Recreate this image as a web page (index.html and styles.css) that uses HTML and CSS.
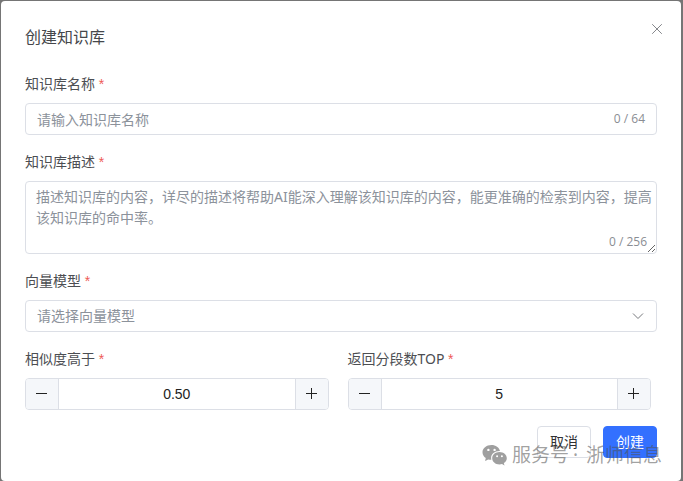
FILE: index.html
```html
<!DOCTYPE html>
<html lang="zh-CN">
<head>
<meta charset="utf-8">
<meta name="viewport" content="width=device-width, initial-scale=1">
<title>创建知识库</title>
<link rel="stylesheet" href="styles.css">
</head>
<body>
<main class="dialog" role="dialog" aria-labelledby="dialog-title">
  <header class="dialog-header">
    <h1 class="dialog-title" id="dialog-title">创建知识库</h1>
    <button class="close" type="button" aria-label="关闭">
      <svg viewBox="0 0 12 12" width="12" height="12"><path d="M1.2 1.2 10.8 10.8M10.8 1.2 1.2 10.8"/></svg>
    </button>
  </header>
  <form class="form">
    <div class="field">
      <label class="label" for="name">知识库名称 <span class="required">*</span></label>
      <div class="control">
        <input class="text-input" id="name" type="text" maxlength="64" placeholder="请输入知识库名称">
        <span class="count">0 / 64</span>
      </div>
    </div>
    <div class="field">
      <label class="label" for="desc">知识库描述 <span class="required">*</span></label>
      <div class="area-wrap">
        <textarea class="area" id="desc" maxlength="256" placeholder="描述知识库的内容，详尽的描述将帮助AI能深入理解该知识库的内容，能更准确的检索到内容，提高该知识库的命中率。"></textarea>
        <span class="count area-count">0 / 256</span>
      </div>
    </div>
    <div class="field">
      <label class="label" for="model">向量模型 <span class="required">*</span></label>
      <div class="control">
        <select class="select" id="model"><option>请选择向量模型</option></select>
        <svg class="chevron" viewBox="0 0 12 12" width="12" height="12"><path d="M1 3.5 6 8.5 11 3.5"/></svg>
      </div>
    </div>
    <div class="pair">
      <div class="field">
        <label class="label" for="similarity">相似度高于 <span class="required">*</span></label>
        <div class="control stepper">
          <button class="step step-minus" type="button" aria-label="减少"><svg viewBox="0 0 12 12" width="12" height="12"><path d="M0 5.5H11"/></svg></button>
          <input class="number" id="similarity" type="text" inputmode="decimal" value="0.50">
          <button class="step step-plus" type="button" aria-label="增加"><svg viewBox="0 0 12 12" width="12" height="12"><path d="M0 5.5H11M5.5 0V11"/></svg></button>
        </div>
      </div>
      <div class="field">
        <label class="label" for="top">返回分段数TOP <span class="required">*</span></label>
        <div class="control stepper">
          <button class="step step-minus" type="button" aria-label="减少"><svg viewBox="0 0 12 12" width="12" height="12"><path d="M0 5.5H11"/></svg></button>
          <input class="number" id="top" type="text" inputmode="numeric" value="5">
          <button class="step step-plus" type="button" aria-label="增加"><svg viewBox="0 0 12 12" width="12" height="12"><path d="M0 5.5H11M5.5 0V11"/></svg></button>
        </div>
      </div>
    </div>
    <footer class="actions">
      <button class="btn" type="button">取消</button>
      <button class="btn btn-primary" type="submit">创建</button>
    </footer>
  </form>
  <div class="watermark">
    <svg viewBox="0 0 26 22" width="26" height="22">
      <path fill-rule="evenodd" d="M9.5 1C4.300 1 .5 4.300.5 8.300c0 2.400 1.300 4.400 3.300 5.800L3 17l3.200-1.600c1.100.3 2 .4 3.200.4-.2-.6-.3-1.200-.3-1.800 0-4 3.600-7 8.300-7h.6C17.200 3.500 13.700 1 9.500 1ZM6.400 4.700a1.200 1.200 0 1 1 0 2.400 1.200 1.200 0 0 1 0-2.400Zm6.200 0a1.200 1.200 0 1 1 0 2.400 1.200 1.200 0 0 1 0-2.400Z"/>
      <path fill-rule="evenodd" d="M17.500 8c-4.200 0-7.300 2.800-7.300 6.200s3.100 6.200 7.300 6.200c.9 0 1.700-.1 2.500-.4l2.500 1.400-.7-2.300c1.800-1.200 3-2.900 3-4.900C24.800 10.800 21.600 8 17.500 8Zm-2.400 3.200a1 1 0 1 1 0 2 1 1 0 0 1 0-2Zm4.800 0a1 1 0 1 1 0 2 1 1 0 0 1 0-2Z"/>
    </svg>
    <span>服务号</span>
    <span>·</span>
    <span class="watermark-name">浙师信息</span>
  </div>
</main>
</body>
</html>
```
FILE: styles.css
```css
* {
  box-sizing: border-box;
}

body {
  margin: 0;
  padding: 1px 2px 0 1px;
  min-height: 100vh;
  display: flex;
  background: #757575;
  color: #4c4e52;
  font: 14px/22px "Noto Sans", "Noto Sans CJK SC", sans-serif;
}

button,
input,
select,
textarea {
  margin: 0;
  padding: 0;
  border: 0;
  background: none;
  color: inherit;
  font: inherit;
}

svg {
  display: block;
  fill: none;
  stroke: currentColor;
}

.dialog {
  position: relative;
  flex: 1;
  min-width: 0;
  padding: 24px 24px 22px;
  border-radius: 4px;
  background: #fff;
}

.dialog-header {
  display: flex;
  justify-content: space-between;
  align-items: flex-start;
  margin-bottom: 24px;
}

.dialog-title {
  margin: 0;
  color: #45474b;
  font-size: 16px;
  font-weight: 400;
  line-height: 24px;
}

.close {
  margin: -2px -6px 0 0;
  color: #85878b;
}

.form {
  display: flex;
  flex-direction: column;
  gap: 16px;
}

.field {
  display: flex;
  flex-direction: column;
  gap: 8px;
  min-width: 0;
}

.required {
  color: #ee5a56;
  font-family: "Liberation Sans", sans-serif;
}

.control,
.area {
  border: 1px solid #dcdfe6;
  border-radius: 4px;
  background: #fff;
}

.control {
  position: relative;
  display: flex;
  align-items: center;
  height: 32px;
}

.text-input,
.select,
.number {
  flex: 1;
  min-width: 0;
  height: 30px;
  outline: 0;
}

.text-input {
  padding-left: 11px;
}

.text-input::placeholder,
.area::placeholder {
  color: #8c929b;
  opacity: 1;
}

.count {
  padding-right: 11px;
  color: #8a8d93;
  font-family: "Open Sans", sans-serif;
  font-size: 12px;
}

.area-wrap {
  position: relative;
  display: flex;
}

.area {
  flex: 1;
  min-width: 0;
  height: 73px;
  padding: 4px 4px 4px 10px;
  line-height: 21px;
  overflow: hidden;
  resize: vertical;
  outline: 0;
}

.area-count {
  position: absolute;
  right: 10px;
  bottom: 1px;
  padding: 0;
}

.select {
  appearance: none;
  padding: 0 32px 0 11px;
  color: #8c929b;
}

.chevron {
  position: absolute;
  right: 12px;
  color: #77797d;
  pointer-events: none;
}

.pair {
  display: grid;
  grid-template-columns: 1fr 1fr;
  gap: 19px;
  padding-right: 6px;
}

.stepper {
  overflow: hidden;
}

.number {
  color: #222;
  font-family: "Liberation Sans", sans-serif;
  text-align: center;
}

.step {
  display: flex;
  align-items: center;
  justify-content: center;
  width: 33px;
  height: 30px;
  background: #f5f7fa;
  color: #222;
}

.step-minus {
  border-right: 1px solid #dcdfe6;
}

.step-plus {
  border-left: 1px solid #dcdfe6;
}

.actions {
  display: flex;
  justify-content: flex-end;
  gap: 12px;
}

.btn {
  width: 54px;
  height: 32px;
  border: 1px solid #dcdfe6;
  border-radius: 4px;
  background: #fff;
  color: #303133;
}

.btn-primary {
  border-color: #3370ff;
  background: #3370ff;
  color: #fff;
}

.watermark {
  position: absolute;
  right: 19px;
  bottom: 12px;
  display: flex;
  align-items: center;
  gap: 4px;
  color: rgba(80, 80, 80, 0.55);
  font-size: 19px;
  line-height: 28px;
  pointer-events: none;
}

.watermark-name {
  margin-left: 4px;
}

.watermark svg {
  fill: currentColor;
  stroke: none;
}
```
